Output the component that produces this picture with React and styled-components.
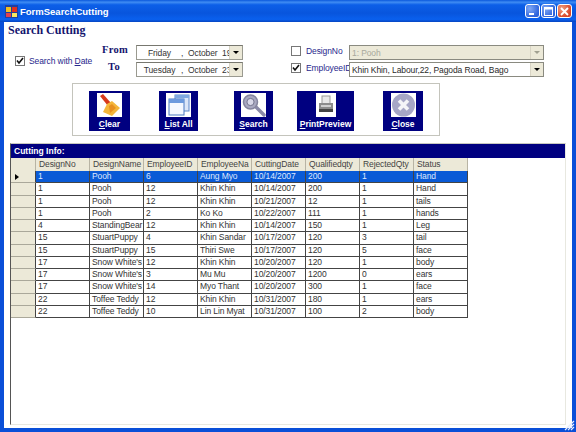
import React from "react";
import styled, { createGlobalStyle } from "styled-components";

const GlobalStyle = createGlobalStyle`
  html, body { margin: 0; padding: 0; background: #fff; }
  body { font-family: "Liberation Sans", Arial, sans-serif; }
`;

const columns = ["DesignNo", "DesignName", "EmployeeID", "EmployeeNa", "CuttingDate", "Qualifiedqty", "RejectedQty", "Status"];

const rows = [
  ["1", "Pooh", "6", "Aung Myo", "10/14/2007", "200", "1", "Hand"],
  ["1", "Pooh", "12", "Khin Khin", "10/14/2007", "200", "1", "Hand"],
  ["1", "Pooh", "12", "Khin Khin", "10/21/2007", "12", "1", "tails"],
  ["1", "Pooh", "2", "Ko Ko", "10/22/2007", "111", "1", "hands"],
  ["4", "StandingBear", "12", "Khin Khin", "10/14/2007", "150", "1", "Leg"],
  ["15", "StuartPuppy", "4", "Khin Sandar", "10/17/2007", "120", "3", "tail"],
  ["15", "StuartPuppy", "15", "Thiri Swe", "10/17/2007", "120", "5", "face"],
  ["17", "Snow White's", "12", "Khin Khin", "10/20/2007", "120", "1", "body"],
  ["17", "Snow White's", "3", "Mu Mu", "10/20/2007", "1200", "0", "ears"],
  ["17", "Snow White's", "14", "Myo Thant", "10/20/2007", "300", "1", "face"],
  ["22", "Toffee Teddy", "12", "Khin Khin", "10/31/2007", "180", "1", "ears"],
  ["22", "Toffee Teddy", "10", "Lin Lin Myat", "10/31/2007", "100", "2", "body"],
];

const Window = styled.div`
  position: relative;
  width: 576px;
  height: 432px;
  box-sizing: border-box;
  display: flex;
  flex-direction: column;
  background: #0a4fd8;
  overflow: hidden;
`;

const TitleBar = styled.div`
  height: 22px;
  flex: none;
  display: flex;
  align-items: center;
  padding: 0 4px 0 5px;
  background: linear-gradient(180deg, #0a58dc 0%, #3f8cf3 10%, #0c5fe8 22%, #0855dd 60%, #0a60ee 88%, #0645c0 100%);
`;

const TitleText = styled.span`
  margin-left: 2px;
  font: bold 9.5px "Liberation Sans", Arial, sans-serif;
  color: #fff;
  flex: 1;
`;

const WinButton = styled.div`
  width: 15px;
  height: 14px;
  margin-left: 1px;
  border: 1px solid #fff;
  border-radius: 3px;
  box-sizing: border-box;
  display: flex;
  align-items: center;
  justify-content: center;
  background: ${(p) =>
    p.$close
      ? "radial-gradient(circle at 30% 30%, #f0a080, #d8482a 70%)"
      : "radial-gradient(circle at 30% 30%, #7fa8f5, #2c62dc 75%)"};
`;

const Body = styled.div`
  flex: 1;
  margin: 0 4px 4px;
  background: #fff;
  display: flex;
  flex-direction: column;
  min-height: 0;
`;

const Heading = styled.h1`
  margin: 2px 0 0 4px;
  height: 21px;
  font: bold 12px "Liberation Serif", serif;
  line-height: 13px;
  color: #14146e;
`;

const Filters = styled.div`
  display: grid;
  grid-template-columns: 87px 34px 107px 48px 58px 195px;
  grid-template-rows: 15px 15px;
  row-gap: 2px;
  margin-left: 11px;
  font-size: 8.5px;
  letter-spacing: -0.1px;
  color: #27278c;
`;

const DateCheck = styled.label`
  grid-row: 1 / span 2;
  grid-column: 1;
  display: flex;
  align-items: center;
  gap: 4px;
  white-space: nowrap;
`;

const Check = styled.span`
  width: 8px;
  height: 8px;
  flex: none;
  border: 1px solid #777;
  background: #fff;
  display: flex;
  align-items: center;
  justify-content: center;
`;

const FromLabel = styled.span`
  grid-column: 2;
  font: bold 10.5px "Liberation Serif", serif;
  letter-spacing: 0.3px;
  color: #14146e;
  text-align: ${(p) => (p.$center ? "center" : "left")};
  padding-right: ${(p) => (p.$center ? "10px" : "0")};
  align-self: center;
  margin-top: -6px;
`;

const DateField = styled.div`
  grid-column: 3;
  display: flex;
  align-items: center;
  box-sizing: border-box;
  padding-left: 1px;
  border: 1px solid #9a9a90;
  border-top-color: #77776f;
  background: #fff;
  color: #333;
  white-space: nowrap;
  overflow: hidden;
  position: relative;
`;

const DatePart = styled.span`
  flex: none;
  width: ${(p) => p.$w}px;
  text-align: ${(p) => p.$align || "left"};
`;

const DropArrow = styled.div`
  position: absolute;
  right: 0;
  top: 0;
  bottom: 0;
  width: 12px;
  background: #ece9d8;
  border-left: 1px solid #d8d4c4;
  display: flex;
  align-items: center;
  justify-content: center;
  &::after {
    content: "";
    border-left: 3px solid transparent;
    border-right: 3px solid transparent;
    border-top: 3px solid ${(p) => (p.$off ? "#a0a090" : "#000")};
  }
`;

const OptionCheck = styled.label`
  grid-column: 5 / span 2;
  grid-row: ${(p) => p.$row};
  display: grid;
  grid-template-columns: 58px 195px;
  align-items: center;
`;

const OptionName = styled.span`
  display: flex;
  align-items: center;
  gap: 5px;
  margin-top: -3px;
  white-space: nowrap;
`;

const Combo = styled.div`
  height: 15px;
  box-sizing: border-box;
  position: relative;
  display: flex;
  align-items: center;
  padding-left: 2px;
  border: 1px solid #8a8a80;
  white-space: nowrap;
  background: ${(p) => (p.$off ? "#ece9d8" : "#fff")};
  color: ${(p) => (p.$off ? "#a8a89c" : "#2a2a2a")};
`;

const ActionPanel = styled.div`
  width: 368px;
  height: 53px;
  box-sizing: border-box;
  margin: 6px 0 0 68px;
  padding: 7px 0 0 16px;
  display: flex;
  align-items: flex-start;
  border: 1px solid #c4c4bc;
`;

const ActionButton = styled.div`
  width: ${(p) => p.$w}px;
  height: 40px;
  margin-left: ${(p) => p.$gap || 0}px;
  flex: none;
  background: #000080;
  display: flex;
  flex-direction: column;
  align-items: center;
  padding-top: 2px;
  box-sizing: border-box;
`;

const IconBox = styled.div`
  width: ${(p) => p.$w || 25}px;
  height: 24px;
  background: #fff;
  display: flex;
  align-items: center;
  justify-content: center;
`;

const ActionLabel = styled.span`
  margin-top: 2px;
  font: bold 8.5px "Liberation Sans", Arial, sans-serif;
  line-height: 11px;
  color: #fff;
  white-space: nowrap;
  u { text-decoration: underline; }
`;

const GridPanel = styled.div`
  flex: 1;
  min-height: 0;
  margin: 7px 6px 3px 6px;
  border-left: 1px solid #555;
  border-right: 1px solid #e8e8e0;
  border-bottom: 1px solid #e8e8e0;
  border-top: 1px solid #c8c8c0;
  display: flex;
  flex-direction: column;
`;

const GridCaption = styled.div`
  height: 14px;
  flex: none;
  background: #000080;
  color: #fff;
  font: bold 8.5px "Liberation Sans", Arial, sans-serif;
  line-height: 14px;
  padding-left: 3px;
`;

const Table = styled.div`
  display: grid;
  grid-template-columns: 25px repeat(8, 54px);
  grid-template-rows: 13px;
  grid-auto-rows: 12.25px;
  width: 457px;
  font-size: 8.5px;
  letter-spacing: -0.1px;
  color: #333;
`;

const HeadCell = styled.div`
  background: #ece9d8;
  border-right: 1px solid #b8b4a4;
  box-sizing: border-box;
  padding-left: 3px;
  line-height: 13px;
  color: #444;
  white-space: nowrap;
  overflow: hidden;
`;

const RowHead = styled.div`
  background: #ece9d8;
  border-right: 1px solid #444;
  border-bottom: 1px solid #aaa89a;
  box-sizing: border-box;
  display: flex;
  align-items: center;
  padding-left: 4px;
  &::before {
    content: "";
    display: ${(p) => (p.$current ? "block" : "none")};
    border-top: 3px solid transparent;
    border-bottom: 3px solid transparent;
    border-left: 4px solid #000;
  }
`;

const Cell = styled.div`
  box-sizing: border-box;
  border-right: 1px solid #444;
  border-bottom: 1px solid #444;
  padding-left: 2px;
  line-height: 11px;
  white-space: nowrap;
  overflow: hidden;
  background: ${(p) => (p.$selected ? "#0a5ad6" : "#fff")};
  color: ${(p) => (p.$selected ? "#dfe8ff" : "#333")};
`;

const Grip = styled.svg`
  position: absolute;
  right: 1px;
  bottom: 1px;
`;

const Tick = () => (
  <svg width="8" height="8" viewBox="0 0 8 8">
    <path d="M1 3.5 L3 6 L7 1" fill="none" stroke="#111" strokeWidth="1.6" />
  </svg>
);

const AppIcon = () => (
  <svg width="13" height="13" viewBox="0 0 13 13">
    <rect x="0" y="0" width="13" height="13" fill="#2040a0" />
    <rect x="1" y="2" width="5" height="5" fill="#f0c020" />
    <rect x="7" y="2" width="5" height="5" fill="#e03020" />
    <rect x="1" y="8" width="5" height="4" fill="#e04050" />
    <rect x="7" y="8" width="5" height="4" fill="#f8e860" />
  </svg>
);

const BroomIcon = () => (
  <svg width="25" height="24" viewBox="0 0 25 24">
    <path d="M3 3 L6 1 L14 10 L11 13 Z" fill="#d83a1c" />
    <path d="M10 11 L15 8 L23 15 L15 23 L6 19 L8 15 Z" fill="#f4b63a" />
    <path d="M12 13 L15 11 L19 15 L13 20 Z" fill="#e89020" />
  </svg>
);

const ListIcon = () => (
  <svg width="25" height="24" viewBox="0 0 25 24">
    <rect x="9" y="2" width="14" height="16" fill="#dbe6f8" stroke="#5c86c8" />
    <rect x="9" y="2" width="14" height="3" fill="#7fa8e0" />
    <rect x="3" y="6" width="15" height="16" fill="#f4f8ff" stroke="#4a78c0" />
    <rect x="3" y="6" width="15" height="4" fill="#6c9ade" />
  </svg>
);

const SearchIcon = () => (
  <svg width="25" height="24" viewBox="0 0 25 24">
    <path d="M14 13 L23 22" stroke="#8a8aa8" strokeWidth="3.4" strokeLinecap="round" />
    <circle cx="9.5" cy="9" r="7" fill="#a8a8c0" stroke="#84849e" strokeWidth="1.5" />
    <circle cx="9.5" cy="9" r="3.6" fill="#d8d8e8" stroke="#74748e" />
  </svg>
);

const PrinterIcon = () => (
  <svg width="20" height="22" viewBox="0 0 20 22">
    <rect x="6" y="2" width="8" height="8" fill="#e8e8e8" stroke="#999" />
    <rect x="3" y="9" width="14" height="6" fill="#8c8c8c" />
    <rect x="3" y="15" width="14" height="3" fill="#444" />
    <rect x="5" y="11" width="10" height="2" fill="#d0d0d0" />
  </svg>
);

const CloseIcon = () => (
  <svg width="25" height="24" viewBox="0 0 25 24">
    <circle cx="12.5" cy="12" r="11.5" fill="#a6a6c6" />
    <path d="M8 7.5 L17 16.5 M17 7.5 L8 16.5" stroke="#f4f4f8" strokeWidth="3.6" />
  </svg>
);

const App = () => {
  return (
    <Window>
      <GlobalStyle />
      <TitleBar>
        <AppIcon />
        <TitleText>FormSearchCutting</TitleText>
        <WinButton>
          <svg width="9" height="9" viewBox="0 0 9 9">
            <rect x="1" y="6" width="5" height="2" fill="#fff" />
          </svg>
        </WinButton>
        <WinButton>
          <svg width="9" height="9" viewBox="0 0 9 9">
            <rect x="0.5" y="0.5" width="8" height="8" fill="none" stroke="#fff" />
            <rect x="0.5" y="0.5" width="8" height="2" fill="#fff" />
          </svg>
        </WinButton>
        <WinButton $close>
          <svg width="9" height="9" viewBox="0 0 9 9">
            <path d="M1 1 L8 8 M8 1 L1 8" stroke="#fff" strokeWidth="1.8" />
          </svg>
        </WinButton>
      </TitleBar>

      <Body>
        <Heading>Search Cutting</Heading>

        <Filters>
          <DateCheck>
            <Check><Tick /></Check>
            <span>Search with <u>D</u>ate</span>
          </DateCheck>
          <FromLabel>From</FromLabel>
          <DateField>
            <DatePart $w={43} $align="center">Friday</DatePart>
            <DatePart $w={7}>,</DatePart>
            <DatePart $w={34}>October</DatePart>
            <DatePart $w={10}>19</DatePart>
            <DropArrow />
          </DateField>
          <OptionCheck $row={1}>
            <OptionName>
              <Check />
              <span>DesignNo</span>
            </OptionName>
            <Combo $off>
              1: Pooh
              <DropArrow $off />
            </Combo>
          </OptionCheck>
          <FromLabel $center>To</FromLabel>
          <DateField>
            <DatePart $w={43} $align="center">Tuesday</DatePart>
            <DatePart $w={7}>,</DatePart>
            <DatePart $w={34}>October</DatePart>
            <DatePart $w={10}>23</DatePart>
            <DropArrow />
          </DateField>
          <OptionCheck $row={2}>
            <OptionName>
              <Check><Tick /></Check>
              <span>EmployeeID</span>
            </OptionName>
            <Combo>
              Khin Khin, Labour,22, Pagoda Road, Bago
              <DropArrow />
            </Combo>
          </OptionCheck>
        </Filters>

        <ActionPanel>
          <ActionButton $w={41}>
            <IconBox><BroomIcon /></IconBox>
            <ActionLabel><u>C</u>lear</ActionLabel>
          </ActionButton>
          <ActionButton $w={39} $gap={29}>
            <IconBox><ListIcon /></IconBox>
            <ActionLabel><u>L</u>ist All</ActionLabel>
          </ActionButton>
          <ActionButton $w={39} $gap={36}>
            <IconBox><SearchIcon /></IconBox>
            <ActionLabel><u>S</u>earch</ActionLabel>
          </ActionButton>
          <ActionButton $w={57} $gap={24}>
            <IconBox $w={20}><PrinterIcon /></IconBox>
            <ActionLabel><u>P</u>rintPreview</ActionLabel>
          </ActionButton>
          <ActionButton $w={40} $gap={29}>
            <IconBox><CloseIcon /></IconBox>
            <ActionLabel><u>C</u>lose</ActionLabel>
          </ActionButton>
        </ActionPanel>

        <GridPanel>
          <GridCaption>Cutting Info:</GridCaption>
          <Table>
            <HeadCell />
            {columns.map((c) => (
              <HeadCell key={c}>{c}</HeadCell>
            ))}
            {rows.map((row, i) => (
              <React.Fragment key={i}>
                <RowHead $current={i === 0} />
                {row.map((v, j) => (
                  <Cell key={j} $selected={i === 0}>{v}</Cell>
                ))}
              </React.Fragment>
            ))}
          </Table>
        </GridPanel>
      </Body>

      <Grip width="12" height="12" viewBox="0 0 12 12">
        <path d="M11 2 L2 11 M11 5 L5 11 M11 8 L8 11" stroke="#e8eefc" strokeWidth="1.2" />
      </Grip>
    </Window>
  );
};

export default App;
